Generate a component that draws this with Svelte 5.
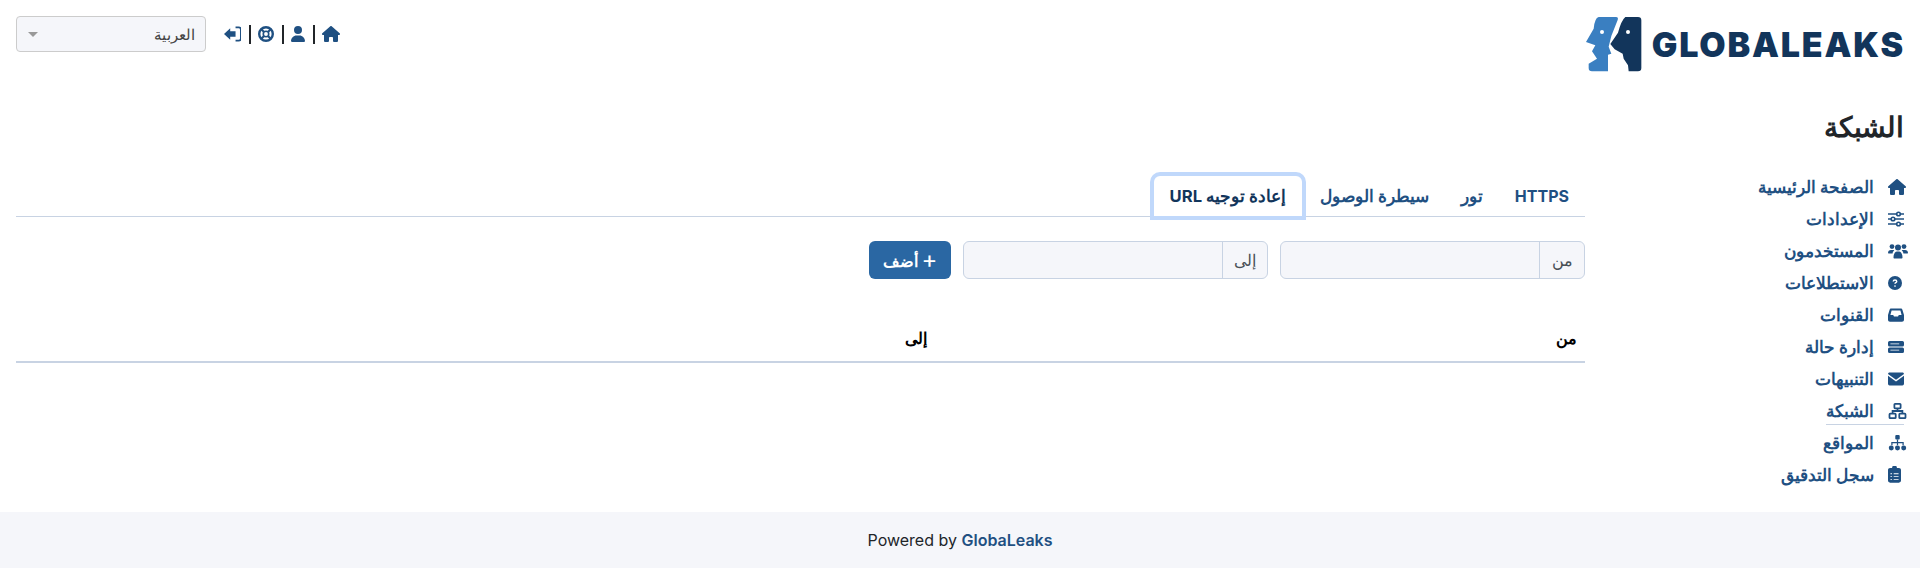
<script lang="ts">
	const menu = [
		{ label: 'الصفحة الرئيسية', icon: 'home' },
		{ label: 'الإعدادات', icon: 'sliders' },
		{ label: 'المستخدمون', icon: 'users' },
		{ label: 'الاستطلاعات', icon: 'question' },
		{ label: 'القنوات', icon: 'inbox' },
		{ label: 'إدارة حالة', icon: 'server' },
		{ label: 'التنبيهات', icon: 'mail' },
		{ label: 'الشبكة', icon: 'network', active: true },
		{ label: 'المواقع', icon: 'sitemap' },
		{ label: 'سجل التدقيق', icon: 'clipboard' }
	];
	const tabs = ['HTTPS', 'تور', 'سيطرة الوصول', 'إعادة توجيه URL'];
	const homePath =
		'M575.8 255.5c0 18-15 32.1-32 32.1h-32l.7 160.2c0 2.7-.2 5.4-.5 8.1V472c0 22.1-17.9 40-40 40H456c-1.1 0-2.2 0-3.3-.1c-1.4 .1-2.8 .1-4.2 .1H392c-22.1 0-40-17.9-40-40V384c0-17.7-14.3-32-32-32H256c-17.7 0-32 14.3-32 32v88c0 22.1-17.9 40-40 40H128.1c-1.5 0-3-.1-4.5-.2c-1.2 .1-2.4 .2-3.6 .2H104c-22.1 0-40-17.9-40-40V360c0-.9 0-1.9 .1-2.8V287.6H32c-18 0-32-14-32-32.1c0-9 3-17 10-24L266.4 8c7-7 15-8 22-8s15 2 21 7L564.8 231.5c8 7 12 15 11 24z';
</script>

{#snippet icon(name)}
	{#if name === 'home'}
		<svg class="ic home" viewBox="0 0 576 512"><path d={homePath} /></svg>
	{:else if name === 'sliders'}
		<svg class="ic line w16" viewBox="0 0 16 16">
			<path d="M0 3h16M0 8h16M0 13h16" />
			<circle cx="10.500" cy="3" r="1.800" fill="#fff" />
			<circle cx="5" cy="8" r="1.800" fill="#fff" />
			<circle cx="10.500" cy="13" r="1.800" fill="#fff" />
		</svg>
	{:else if name === 'users'}
		<svg class="ic users" viewBox="0 0 20 16">
			<circle cx="4" cy="3.600" r="2.400" />
			<circle cx="16" cy="3.600" r="2.400" />
			<circle cx="10" cy="4.500" r="3" />
			<path d="M0 10c0-2 1.200-3 3-3h2c.5 0 1 .1 1.300.3C5.300 8.200 4.700 9.300 4.600 10.500H.6C.2 10.500 0 10.300 0 10zM20 10c0-2-1.200-3-3-3h-2c-.5 0-1 .1-1.300.3 1 .9 1.600 2 1.700 3.200h4c.4 0 .6-.2.6-.5zM5.500 14.500C5.500 11 7 8.500 9 8.500h2c2 0 3.500 2.500 3.500 6 0 .6-.4 1-1 1h-7c-.6 0-1-.4-1-1z" />
		</svg>
	{:else if name === 'question'}
		<svg class="ic question" viewBox="0 0 20 20">
			<circle cx="10" cy="10" r="10" />
			<path d="M7.500 8c0-1.500 1.100-2.300 2.500-2.300s2.500.8 2.500 2.200c0 1.800-2.500 1.600-2.500 3.100" fill="none" stroke="#fff" stroke-width="2" />
			<circle cx="10" cy="14.300" r="1.200" fill="#fff" />
		</svg>
	{:else if name === 'inbox'}
		<svg class="ic w16" viewBox="0 0 20 18">
			<path fill-rule="evenodd" d="M4 1h12c1 0 1.700.6 2 1.500L20 9v6c0 1.400-1.100 2.500-2.500 2.500h-15C1.100 17.500 0 16.400 0 15V9l2-6.500C2.300 1.600 3 1 4 1zm.5 2.500L3 9h3.500l1 2h5l1-2H17l-1.500-5.500z" />
		</svg>
	{:else if name === 'server'}
		<svg class="ic w16" viewBox="0 0 20 16">
			<path fill-rule="evenodd" d="M2 .5h16a2 2 0 0 1 2 2v3a2 2 0 0 1-2 2H2a2 2 0 0 1-2-2v-3a2 2 0 0 1 2-2zm1 3v1h11v-1zM2 8.500h16a2 2 0 0 1 2 2v3a2 2 0 0 1-2 2H2a2 2 0 0 1-2-2v-3a2 2 0 0 1 2-2zm1 3v1h11v-1z" />
		</svg>
	{:else if name === 'mail'}
		<svg class="ic w16" viewBox="0 0 20 16">
			<path d="M2 0h16c1.100 0 2 .9 2 1.700L10 9 0 1.700C0 .9.900 0 2 0zM0 4l10 7.200L20 4V14c0 1.100-.9 2-2 2H2c-1.100 0-2-.9-2-2z" />
		</svg>
	{:else if name === 'network'}
		<svg class="ic line net thick" viewBox="0 0 20 18">
			<rect x="6.500" y="1" width="7" height="5" rx=".8" />
			<rect x="1" y="12" width="7" height="5" rx=".8" />
			<rect x="12" y="12" width="7" height="5" rx=".8" />
			<path d="M10 6v3M4.500 12V9h11v3" />
		</svg>
	{:else if name === 'sitemap'}
		<svg class="ic net" viewBox="0 0 20 18">
			<rect x="7.500" y="0" width="5" height="5" rx="1.200" />
			<circle cx="3" cy="14.500" r="2.800" />
			<circle cx="10" cy="14.500" r="2.800" />
			<circle cx="17" cy="14.500" r="2.800" />
			<path d="M9.300 5h1.400v3H17v3.500h-1.400V9.400h-4.900v2.100H9.300V9.400H4.400v2.100H3V8h6.300z" />
		</svg>
	{:else if name === 'clipboard'}
		<svg class="ic clip" viewBox="0 0 16 20">
			<path fill-rule="evenodd" d="M5 2a3 3 0 0 1 6 0h2.500C14.900 2 16 3.100 16 4.500v13c0 1.400-1.100 2.500-2.500 2.500h-11C1.100 20 0 18.900 0 17.500v-13C0 3.100 1.100 2 2.500 2zM7 8.500v1.200h6V8.500zM7 12v1.200h6V12zM7 15.400v1.200h6v-1.200zM3 8.500v1.200h2V8.500zM3 12v1.200h2V12zM3 15.400v1.200h2v-1.200z" />
		</svg>
	{/if}
{/snippet}

<div class="page" dir="rtl">
	<header class="top">
		<div class="brand">
			<svg class="mark" viewBox="0 0 198 192">
				<path fill="#3a7fc1" d="M50 15H102Q110 15 107 24L88 72L80 104L88 125L78 128V178H30Q20 178 20 168V155L45 140L30 118L40 100L12 90L35 50Q38 18 50 15Z" />
				<circle cx="60" cy="60" r="6" fill="#fff" />
				<path fill="#12355b" d="M130 15H168Q178 15 178 25V168Q178 178 168 178H140L138 160L125 140L122 125L98 112L85 96L108 62Q118 25 130 15Z" />
				<circle cx="138" cy="60" r="6" fill="#fff" />
			</svg>
			<span class="wordmark" dir="ltr">GLOBALEAKS</span>
		</div>
		<nav class="usernav">
			<svg class="uic" viewBox="0 0 576 512"><path d={homePath} /></svg>
			<span class="sep"></span>
			<svg class="uic" viewBox="0 0 448 512"><path d="M224 256A128 128 0 1 0 224 0a128 128 0 1 0 0 256zm-45.700 48C79.800 304 0 383.800 0 482.300C0 498.700 13.300 512 29.700 512H418.300c16.400 0 29.700-13.300 29.700-29.700C448 383.800 368.200 304 269.700 304H178.300z" /></svg>
			<span class="sep"></span>
			<svg class="uic" viewBox="0 0 20 20">
				<circle cx="10" cy="10" r="8.500" fill="none" stroke="#1f5082" stroke-width="3" />
				<circle cx="10" cy="10" r="3.400" fill="none" stroke="#1f5082" stroke-width="2" />
				<path d="M4.500 4.500l3 3M15.500 4.500l-3 3M4.500 15.500l3-3M15.500 15.500l-3-3" stroke="#1f5082" stroke-width="2.600" />
			</svg>
			<span class="sep"></span>
			<svg class="uic" viewBox="0 0 20 18">
				<path d="M0 9l7-6.500V6h6v6H7v3.500z" />
				<path d="M13 1.500h3.500c1.400 0 2.500 1.100 2.500 2.500v10c0 1.400-1.100 2.500-2.500 2.500H13" fill="none" stroke="#1f5082" stroke-width="2" />
			</svg>
			<div class="lang">
				<span>العربية</span>
				<i class="caret"></i>
			</div>
		</nav>
	</header>

	<div class="body">
		<aside class="side">
			<h1>الشبكة</h1>
			<ul>
				{#each menu as item}
					<li>
						<a class="item" class:active={item.active} href="#top">
							<span class="ic-box">{@render icon(item.icon)}</span>
							<span>{item.label}</span>
						</a>
					</li>
				{/each}
			</ul>
		</aside>

		<main class="content">
			<div class="tabs">
				{#each tabs as tab, i}
					<button class="tab" class:latin={i === 0} class:current={i === 3}>{tab}</button>
				{/each}
			</div>

			<form class="add">
				<div class="group">
					<span class="addon">من</span>
					<input type="text" />
				</div>
				<div class="group">
					<span class="addon">إلى</span>
					<input type="text" />
				</div>
				<button class="btn" type="button"><span class="plus">+</span> أضف</button>
			</form>

			<div class="thead">
				<span>من</span>
				<span>إلى</span>
			</div>
		</main>
	</div>

	<footer class="foot">
		<span dir="ltr">Powered by <b>GlobaLeaks</b></span>
	</footer>
</div>

<style>
	:global(body) {
		margin: 0;
		background: #fff;
	}

	.page {
		font-family: Inter, sans-serif;
		font-size: 16px;
		color: #212529;
		height: 568px;
		display: flex;
		flex-direction: column;
	}

	.top {
		display: flex;
		justify-content: space-between;
		padding: 12px 15px 0 16px;
		height: 68px;
	}
	.brand {
		display: flex;
		align-items: center;
		height: 64px;
		gap: 4px;
	}
	.mark {
		width: 66px;
		height: 64px;
		order: 2;
	}
	.wordmark {
		font-family: Inter, sans-serif;
		font-weight: 900;
		font-size: 34px;
		letter-spacing: 1.8px;
		color: #12355b;
		order: 1;
	}

	.usernav {
		display: flex;
		align-items: center;
		height: 36px;
		margin-top: 4px;
		gap: 7.500px;
	}
	.uic {
		height: 16px;
		width: auto;
		fill: #1f5082;
	}
	.sep {
		width: 2px;
		height: 19px;
		background: #212529;
	}
	.lang {
		width: 190px;
		height: 36px;
		box-sizing: border-box;
		margin-right: 10px;
		padding: 0 10px;
		display: flex;
		align-items: center;
		justify-content: space-between;
		background: #f5f6fa;
		border: 1px solid #ccc;
		border-radius: 4px;
		color: #444;
		font-size: 15px;
	}
	.caret {
		border-style: solid;
		border-width: 5px 5px 0;
		border-color: #999 transparent transparent;
		margin-left: 1px;
	}

	.body {
		flex: 1;
		display: flex;
		align-items: flex-start;
	}
	.side {
		width: 335px;
		padding-right: 16px;
		box-sizing: border-box;
		flex: none;
	}
	h1 {
		margin: 29px 0 0;
		font-size: 28px;
		line-height: 36px;
		font-weight: 700;
		color: #212529;
	}
	ul {
		list-style: none;
		margin: 26px 0 0;
		padding: 0;
	}
	li {
		height: 32px;
		display: flex;
		align-items: flex-start;
	}
	.item {
		display: flex;
		align-items: center;
		height: 27px;
		margin-top: 2px;
		gap: 14px;
		color: #1f5082;
		font-size: 16.600px;
		font-weight: 700;
		text-decoration: none;
	}
	.item.active {
		border-bottom: 1px solid #c8d3e3;
	}
	.ic-box {
		width: 19px;
		display: flex;
		justify-content: flex-end;
		margin-right: -3px;
	}
	.ic {
		height: 16px;
		width: 16px;
		flex: none;
		fill: #1f5082;
	}
	.ic.line {
		fill: none;
		stroke: #1f5082;
		stroke-width: 1.6;
	}
	.ic.thick {
		stroke-width: 2;
	}
	.ic.home {
		width: 18px;
	}
	.ic.users {
		width: 20px;
	}
	.ic.question {
		width: 14px;
	}
	.ic.net {
		width: 19px;
	}
	.ic.clip {
		width: 13px;
		height: 17px;
	}

	.content {
		flex: 1;
		min-width: 0;
		margin-top: 96px;
		margin-left: 16px;
	}
	.tabs {
		display: flex;
		height: 41px;
		box-sizing: border-box;
		border-bottom: 1px solid #c8d3e3;
	}
	.tab {
		font: inherit;
		font-size: 16.600px;
		font-weight: 700;
		color: #1f5082;
		background: none;
		border: 0;
		padding: 0 16px;
		height: 40px;
	}
	.tab.latin {
		font-size: 16px;
	}
	.tab.current {
		background: #fff;
		color: #12355b;
		border-radius: 6px 6px 0 0;
		box-shadow: 0 0 0 4px #c0d8fb;
		margin-right: 2px;
		position: relative;
	}

	.add {
		display: flex;
		gap: 12px;
		margin-top: 24px;
	}
	.group {
		display: flex;
		width: 305px;
		height: 38px;
		box-sizing: border-box;
		border: 1px solid #c8d3e3;
		border-radius: 6px;
		background: #f5f6fa;
		overflow: hidden;
	}
	.addon {
		width: 45px;
		box-sizing: border-box;
		border-left: 1px solid #c8d3e3;
		display: flex;
		align-items: center;
		justify-content: center;
		color: #495057;
	}
	input {
		flex: 1;
		min-width: 0;
		border: 0;
		background: none;
		outline: none;
	}
	.btn {
		width: 82px;
		height: 38px;
		border: 0;
		border-radius: 6px;
		background: #2a67a3;
		color: #fff;
		font: inherit;
		font-weight: 700;
		padding: 0;
	}
	.plus {
		font-size: 24px;
		font-weight: 400;
		line-height: 1;
		vertical-align: -1px;
	}

	.thead {
		display: grid;
		grid-template-columns: 650px 1fr;
		margin-top: 46px;
		height: 36px;
		border-bottom: 2px solid #c8d3e3;
		font-weight: 700;
		color: #000;
	}
	.thead span {
		padding-right: 8px;
		line-height: 26px;
	}

	.foot {
		height: 56px;
		flex: none;
		background: #f5f6fa;
		display: flex;
		align-items: center;
		justify-content: center;
		color: #212529;
	}
	.foot b {
		color: #1f5082;
		font-weight: 600;
	}
</style>
